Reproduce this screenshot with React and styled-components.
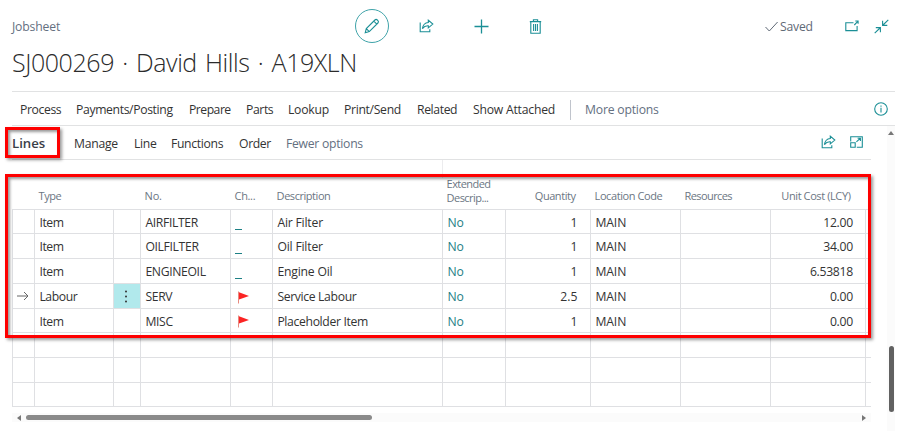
import React from "react";
import styled, { createGlobalStyle } from "styled-components";

const GlobalStyle = createGlobalStyle`
  * { box-sizing: border-box; }
  html, body { margin: 0; background: #fff; overflow: hidden; }
  body { font-family: "Open Sans", "Noto Sans", sans-serif; font-size: 12.2px; color: #333; }
`;

const TEAL = "#1b8f96";

const Page = styled.main`
  position: relative;
  display: flex;
  flex-direction: column;
  width: 900px;
  height: 431px;
  padding-left: 12px;
  overflow: hidden;
  background: #fff;
`;

const TopBar = styled.header`
  display: flex;
  align-items: center;
  height: 34px;
  margin-top: 9px;
`;

const Caption = styled.span`
  width: 343px;
  color: #646f7f;
  letter-spacing: -0.15px;
`;

const IconButton = styled.button`
  display: flex;
  align-items: center;
  justify-content: center;
  width: ${(p) => p.$w || 34}px;
  height: 34px;
  margin: 0 ${(p) => p.$after || 0}px 0 0;
  padding: 0;
  border: ${(p) => (p.$ring ? "1px solid #3fa3a9" : "0")};
  border-radius: 50%;
  background: none;
  color: ${TEAL};
`;

const Saved = styled.span`
  display: flex;
  align-items: center;
  gap: 2px;
  width: 80px;
  margin-left: 213px;
  color: #5f6976;
  letter-spacing: -0.2px;
`;

const Title = styled.h1`
  height: 48px;
  margin: 0;
  font-size: 25px;
  font-weight: 300;
  line-height: 38px;
  letter-spacing: -0.43px;
  word-spacing: 2.2px;
  white-space: nowrap;
  color: #2b2b2b;
`;

const Bar = styled.nav`
  display: flex;
  align-items: center;
  width: ${(p) => p.$w}px;
  height: ${(p) => p.$h || 34}px;
  border-top: ${(p) => (p.$line ? "1px solid #e1e2e3" : "0")};
  padding: ${(p) => p.$top || 0}px 0 0 ${(p) => p.$pad || 0}px;
`;

const MenuItem = styled.span`
  flex: none;
  width: ${(p) => (p.$w ? `${p.$w}px` : "auto")};
  color: ${(p) => (p.$strong ? "#3a4048" : p.$muted ? "#646f7f" : "#333")};
  font-size: ${(p) => (p.$strong ? "13.2px" : "inherit")};
  font-weight: ${(p) => (p.$strong ? 600 : 400)};
  letter-spacing: ${(p) => p.$ls || 0}px;
  white-space: nowrap;
`;

const Divider = styled.span`
  width: 1px;
  height: 20px;
  margin-right: 14px;
  background: #c0c4cc;
`;

const Push = styled.span`
  display: flex;
  align-items: center;
  gap: 14px;
  margin: 0 ${(p) => p.$right || 7}px ${(p) => p.$lift || 0}px auto;
  color: ${TEAL};
`;

const Body = styled.section`
  display: flex;
  width: 883px;
  height: 306px;
  border-top: 1px solid #e1e2e3;
  justify-content: space-between;
`;

const Main = styled.div`
  width: 859px;
`;

const Grid = styled.div`
  display: grid;
  grid-template-columns: 22px 79px 27px 90px 42px 170px 63px 85px 90px 90px 95px 6px;
  grid-template-rows: 18px 32px 24px 25px 25px 25px 24px 25px 25px 24px;
  border-top: 1px solid #e1e2e3;
`;

const Spacer = styled.div`
  grid-column: ${(p) => p.$col};
  border-left: ${(p) => (p.$line ? "1px solid #ececee" : "0")};
`;

const Head = styled.div`
  display: flex;
  align-items: ${(p) => (p.$tall ? "flex-start" : "center")};
  justify-content: ${(p) => (p.$right ? "flex-end" : "flex-start")};
  padding: ${(p) => (p.$tall ? 0 : 4)}px ${(p) => p.$pr || 0}px 0 4.6px;
  margin-top: ${(p) => (p.$tall ? -1 : 0)}px;
  border-bottom: 1px solid #dfe0e3;
  color: #6b7683;
  font-size: 11px;
  line-height: 14px;
  letter-spacing: ${(p) => p.$ls || 0}px;
  white-space: pre;
`;

const Cell = styled.div`
  display: flex;
  align-items: center;
  justify-content: ${(p) => (p.$right ? "flex-end" : "flex-start")};
  padding: 1px ${(p) => (p.$right ? p.$pr : 0)}px 0 4.4px;
  border-left: 1px solid #dfe0e3;
  border-bottom: 1px solid #dfe0e3;
  color: ${(p) => (p.$link ? "#1d8085" : "#333")};
  background: ${(p) => (p.$active ? "#b1e9ec" : "transparent")};
  letter-spacing: ${(p) => p.$ls || 0}px;
  white-space: nowrap;
`;

const HScroll = styled.div`
  display: flex;
  align-items: center;
  justify-content: space-between;
  height: 9px;
  margin-top: 6px;
  padding: 0 4px;
  background: #fbfbfb;
`;

const HThumb = styled.span`
  width: 346px;
  height: 5px;
  margin: 0 auto 0 4px;
  border-radius: 3px;
  background: #8a8a8a;
`;

const VScroll = styled.div`
  display: flex;
  flex-direction: column;
  align-items: center;
  width: 8px;
  padding-top: 4px;
  background: #fbfbfb;
`;

const VThumb = styled.span`
  width: 5px;
  height: 66px;
  margin-top: 210px;
  border-radius: 3px;
  background: #616161;
`;

const Highlight = styled.div`
  position: absolute;
  left: 5px;
  top: ${(p) => p.$top}px;
  width: ${(p) => p.$w}px;
  height: ${(p) => p.$h}px;
  border: 3px solid #fe0000;
  box-shadow: 2px 2px 3px rgba(0, 0, 0, 0.4), inset 2px 2px 3px rgba(0, 0, 0, 0.4);
`;

const Svg = ({ w, h, children, sw = 1 }) => (
  <svg width={w} height={h} viewBox={`0 0 ${w} ${h}`} fill="none" stroke="currentColor" strokeWidth={sw}>
    {children}
  </svg>
);

const Pencil = () => (
  <Svg w={16} h={16} sw={1.1}>
    <path d="M1.2 14.8l1.1-4.2L10.9 2a1.7 1.7 0 0 1 2.4 0l.6.6a1.7 1.7 0 0 1 0 2.4l-8.6 8.6zM2.3 10.6l3 3M9.8 3.1l3 3" />
  </Svg>
);
const Share = () => (
  <Svg w={15} h={14} sw={1.1}>
    <path d="M1.2 3.5v9.3h9.6v-2.6M9.3 1.2l4.5 3.9-4.5 3.8V6.8C6.9 6.6 5 7.4 3.4 9.6 3.9 6 6 3.8 9.3 3.5z" />
  </Svg>
);
const Plus = () => (
  <Svg w={15} h={15} sw={1.3}><path d="M7.5 .5v14M.5 7.5h14" /></Svg>
);
const Trash = () => (
  <Svg w={13} h={15} sw={1.1}>
    <path d="M.8 2.6h11.4M4.4 2.4V.8h4.2v1.6M1.8 2.8v11.4h9.4V2.8M4.6 5v7M6.5 5v7M8.4 5v7" />
  </Svg>
);
const Check = () => (
  <Svg w={13} h={11}><path d="M.5 6l3.8 4L12.6 1" /></Svg>
);
const Popout = () => (
  <Svg w={14} h={12} sw={1.1}>
    <path d="M8.5 2.8H.8v7.8h11.3V6M9.3 5l3.5-3.6M10.3 1h2.8v2.7" />
  </Svg>
);
const Collapse = () => (
  <Svg w={15} h={15} sw={1.1}>
    <path d="M14.3.9L9 6M8.6 1.8v4.6h4.7M.7 14.1L6 9M1.8 8.6h4.6v4.7" />
  </Svg>
);
const Info = () => (
  <Svg w={14} h={14} sw={1.1}>
    <circle cx="7" cy="7" r="6.3" /><path d="M7 5.8v4.6M7 3.6v1.2" />
  </Svg>
);
const Expand = () => (
  <Svg w={13} h={12} sw={1.1}>
    <path d="M.7 5.5V.7h11.6v10.6H6.8M.7 6.8h4.5v4.5H.7zM6.4 5.9l3.8-3.6M7.6 2.3h2.8v2.7" />
  </Svg>
);
const RowArrow = () => (
  <Svg w={12} h={10}><path d="M0 5h11M7 1l4 4-4 4" stroke="#666" /></Svg>
);
const Flag = () => (
  <svg width="12" height="13" viewBox="0 0 12 13">
    <path d="M.5 .5v12" stroke="#e88a80" />
    <path d="M1 1.2l10 3.7L1 8.4z" fill="#fb2424" />
  </svg>
);
const Dots = () => (
  <svg width="4" height="13" viewBox="0 0 4 13" fill="#333">
    <circle cx="2" cy="1.5" r="1" /><circle cx="2" cy="6.5" r="1" /><circle cx="2" cy="11.5" r="1" />
  </svg>
);
const Triangle = ({ d }) => (
  <svg width="6" height="6" viewBox="0 0 6 6" fill="#777"><path d={d} /></svg>
);

const FlagSlot = styled.span`
  display: flex;
  margin: 1px 0 0 3px;
`;
const Dash = styled.span`
  width: 7px;
  height: 1px;
  margin-top: 14px;
  background: #1d8085;
`;
const Nudge = styled.span`
  display: flex;
  margin: 0 0 1px ${(p) => p.$x}px;
`;

const heads = [
  [""], ["Type", { $ls: -0.5 }], [""], ["No.", { $ls: -0.2 }], ["Ch...", { $ls: -0.35 }],
  ["Description", { $ls: -0.45 }],
  ["Extended\nDescrip...", { $tall: true, $ls: -0.55 }],
  ["Quantity", { $right: true, $pr: 14.5, $ls: -0.45 }],
  ["Location Code", { $ls: -0.42 }], ["Resources", { $ls: -0.6 }],
  ["Unit Cost (LCY)", { $right: true, $pr: 14.5, $ls: -0.4 }], [""],
];

const rows = [
  ["Item", "AIRFILTER", false, "Air Filter", "1", "12.00"],
  ["Item", "OILFILTER", false, "Oil Filter", "1", "34.00"],
  ["Item", "ENGINEOIL", false, "Engine Oil", "1", "6.53818"],
  ["Labour", "SERV", true, "Service Labour", "2.5", "0.00"],
  ["Item", "MISC", true, "Placeholder Item", "1", "0.00"],
];

const Row = ({ data: [type, no, flag, desc, qty, cost], active }) => (
  <>
    <Cell>{active && <Nudge $x={0}><RowArrow /></Nudge>}</Cell>
    <Cell $ls={-0.4}>{type}</Cell>
    <Cell $active={active}>{active && <Nudge $x={6}><Dots /></Nudge>}</Cell>
    <Cell $ls={-0.35}>{no}</Cell>
    <Cell>{flag ? <FlagSlot><Flag /></FlagSlot> : <Dash />}</Cell>
    <Cell $ls={desc.length > 10 ? -0.35 : -0.2}>{desc}</Cell>
    <Cell $link>No</Cell>
    <Cell $right $pr={12.5}>{qty}</Cell>
    <Cell $ls={-0.1}>MAIN</Cell>
    <Cell />
    <Cell $right $pr={12.2} $ls={-0.3}>{cost}</Cell>
    <Cell />
  </>
);

const actions = [
  ["Process", 56, -0.38], ["Payments/Posting", 113, -0.36], ["Prepare", 57, -0.5],
  ["Parts", 42, -0.4], ["Lookup", 56, -0.25], ["Print/Send", 73, -0.32],
  ["Related", 56, -0.38], ["Show Attached", 97, -0.22],
];
const lineActions = [
  ["Manage", 60, -0.25], ["Line", 37, -0.3], ["Functions", 68, -0.32], ["Order", 47, -0.35],
];

export default function App() {
  return (
    <Page>
      <GlobalStyle />
      <TopBar>
        <Caption>Jobsheet</Caption>
        <IconButton $ring $after={20}><Pencil /></IconButton>
        <IconButton $after={21}><Share /></IconButton>
        <IconButton $after={20}><Plus /></IconButton>
        <IconButton><Trash /></IconButton>
        <Saved><Check />Saved</Saved>
        <IconButton $w={14} $after={15}><Popout /></IconButton>
        <IconButton $w={15}><Collapse /></IconButton>
      </TopBar>
      <Title>SJ000269 · David Hills · A19XLN</Title>
      <Bar $line $w={883} $pad={8} $top={2}>
        {actions.map(([t, w, ls]) => <MenuItem key={t} $w={w} $ls={ls}>{t}</MenuItem>)}
        <Divider />
        <MenuItem $muted $ls={-0.2}>More options</MenuItem>
        <Push $lift={2}><Info /></Push>
      </Bar>
      <Body>
        <Main>
          <Bar as="div" $w={859} $h={33} $top={1}>
            <MenuItem $strong $w={62}>Lines</MenuItem>
            {lineActions.map(([t, w, ls]) => <MenuItem key={t} $w={w} $ls={ls}>{t}</MenuItem>)}
            <MenuItem $muted $ls={-0.27}>Fewer options</MenuItem>
            <Push $right={8} $lift={2}><Share /><Expand /></Push>
          </Bar>
          <Grid>
            <Spacer $col="1 / 7" />
            <Spacer $col="7 / 13" $line />
            {heads.map(([t, p], i) => <Head key={i} {...p}>{t}</Head>)}
            {rows.map((r, i) => <Row key={r[1]} data={r} active={i === 3} />)}
            {Array.from({ length: 36 }, (_, i) => <Cell key={i} />)}
          </Grid>
          <HScroll>
            <Triangle d="M5 0v6L1 3z" />
            <HThumb />
            <Triangle d="M1 0v6l4-3z" />
          </HScroll>
        </Main>
        <VScroll>
          <Triangle d="M0 5h6L3 1z" />
          <VThumb />
        </VScroll>
      </Body>
      <Highlight $top={127} $w={55} $h={31} />
      <Highlight $top={174} $w={866} $h={164} />
    </Page>
  );
}
